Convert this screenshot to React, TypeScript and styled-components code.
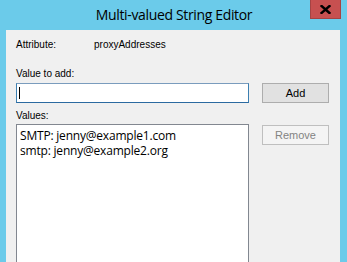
import styled, { createGlobalStyle } from "styled-components";

const GlobalStyle = createGlobalStyle`
  html, body {
    margin: 0;
    padding: 0;
    background: #6bcbea;
    overflow: hidden;
  }
`;

const values = ["SMTP: jenny@example1.com", "smtp: jenny@example2.org"];

function App() {
  return (
    <>
      <GlobalStyle />
      <Window>
        <TitleBar>
          <Title>Multi-valued String Editor</Title>
          <CloseButton>
            <svg width="11" height="9" viewBox="0 0 11 9">
              <path
                d="M1.5 1 L9.5 8 M9.5 1 L1.5 8"
                stroke="#000"
                strokeWidth="2.4"
                strokeLinecap="square"
              />
            </svg>
          </CloseButton>
        </TitleBar>
        <Client>
          <AttributeRow>
            <Label>Attribute:</Label>
            <Label>proxyAddresses</Label>
          </AttributeRow>
          <Label $top={16}>Value to add:</Label>
          <FieldRow $top={3}>
            <TextBox>
              <Caret />
            </TextBox>
            <Button>Add</Button>
          </FieldRow>
          <Label $top={6}>Values:</Label>
          <FieldRow $top={2}>
            <ListBox>
              {values.map((v) => (
                <ListItem key={v}>{v}</ListItem>
              ))}
            </ListBox>
            <Button $disabled>Remove</Button>
          </FieldRow>
        </Client>
      </Window>
    </>
  );
}

export default App;

const Window = styled.div`
  width: 347px;
  height: 262px;
  display: flex;
  flex-direction: column;
  background: #6bcbea;
  padding: 0 7px 0 6px;
  box-sizing: border-box;
  overflow: hidden;
`;

const TitleBar = styled.div`
  position: relative;
  flex-shrink: 0;
  height: 30px;
  display: flex;
  justify-content: center;
  align-items: flex-start;
`;

const Title = styled.div`
  font-family: "Open Sans", "Noto Sans", sans-serif;
  font-size: 14px;
  letter-spacing: -0.35px;
  color: #000;
  margin-top: 5px;
  margin-left: 2px;
`;

const CloseButton = styled.div`
  position: absolute;
  right: -1px;
  top: 0;
  width: 31px;
  height: 19px;
  box-sizing: border-box;
  background: #c75050;
  border: 1px solid #a54343;
  border-top: none;
  display: flex;
  align-items: center;
  justify-content: center;
`;

const Client = styled.div`
  flex: 1;
  min-height: 0;
  overflow: hidden;
  background: #f0f0f0;
  padding: 8px 0 0 10px;
  font-family: "Liberation Sans", Arial, sans-serif;
  font-size: 10px;
  color: #000;
`;

const AttributeRow = styled.div`
  display: flex;
  & > div:first-child {
    width: 78px;
  }
`;

const Label = styled.div<{ $top?: number }>`
  line-height: 13px;
  margin-top: ${(p) => p.$top ?? 0}px;
`;

const FieldRow = styled.div<{ $top: number }>`
  display: flex;
  align-items: flex-start;
  gap: 13px;
  margin-top: ${(p) => p.$top}px;
`;

const TextBox = styled.div`
  width: 233px;
  height: 20px;
  box-sizing: border-box;
  background: #fff;
  border: 1px solid #3c7fb1;
  border-top-color: #7a9cbd;
  border-bottom-color: #2b6aa0;
  display: flex;
  align-items: center;
  padding-left: 2px;
`;

const Caret = styled.div`
  width: 1px;
  height: 12px;
  background: #000;
`;

const Button = styled.div<{ $disabled?: boolean }>`
  width: 67px;
  height: 20px;
  box-sizing: border-box;
  display: flex;
  align-items: center;
  justify-content: center;
  font-size: 11px;
  background: ${(p) => (p.$disabled ? "#f4f4f4" : "#e1e1e1")};
  border: 1px solid ${(p) => (p.$disabled ? "#bfbfbf" : "#adadad")};
  color: ${(p) => (p.$disabled ? "#838383" : "#000")};
  margin-top: ${(p) => (p.$disabled ? "1px" : "0")};
`;

const ListBox = styled.div`
  width: 233px;
  height: 160px;
  flex-shrink: 0;
  box-sizing: border-box;
  background: #fff;
  border: 1px solid #828790;
  padding: 3px 0 0 3px;
`;

const ListItem = styled.div`
  font-family: "Open Sans", "Noto Sans", sans-serif;
  font-size: 12px;
  letter-spacing: -0.2px;
  line-height: 15px;
  white-space: nowrap;
`;
